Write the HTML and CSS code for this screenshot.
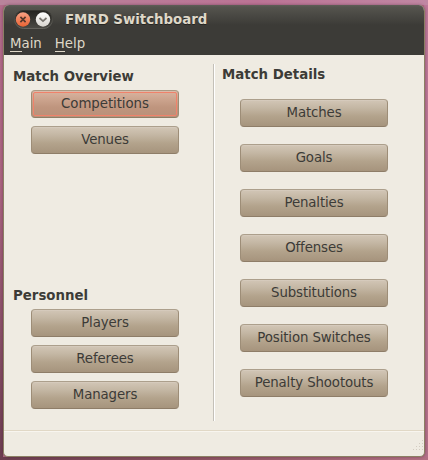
FILE: index.html
```html
<!DOCTYPE html>
<html lang="en">
<head>
<meta charset="utf-8">
<title>FMRD Switchboard</title>
<link rel="stylesheet" href="styles.css">
</head>
<body>
<div class="window">
  <header class="chrome">
    <div class="titlebar">
      <svg class="controls" width="39" height="19" viewBox="0 0 39 19" aria-hidden="true">
        <defs>
          <linearGradient id="pill" x1="0" y1="0" x2="0" y2="1"><stop offset="0" stop-color="#24231f"/><stop offset="1" stop-color="#4b4a45"/></linearGradient>
          <linearGradient id="rim" x1="0" y1="0" x2="0" y2="1"><stop offset="0" stop-color="#363530"/><stop offset="1" stop-color="#65645e"/></linearGradient>
          <linearGradient id="close" x1="0" y1="0" x2="0" y2="1"><stop offset="0" stop-color="#f9a184"/><stop offset="1" stop-color="#ea6434"/></linearGradient>
          <linearGradient id="shade" x1="0" y1="0" x2="0" y2="1"><stop offset="0" stop-color="#ffffff"/><stop offset="1" stop-color="#d8d5cf"/></linearGradient>
        </defs>
        <rect x=".5" y=".5" width="38" height="18" rx="9" fill="url(#pill)" stroke="url(#rim)"/>
        <circle cx="9" cy="9.5" r="7.2" fill="url(#close)"/>
        <path d="M6.4 6.9l5.2 5.2M11.6 6.9l-5.2 5.2" stroke="#57382b" stroke-width="1.7"/>
        <circle cx="29" cy="9.5" r="7.2" fill="url(#shade)"/>
        <path d="M25.5 8l3.5 3.2L32.5 8" fill="none" stroke="#77746e" stroke-width="1.7"/>
      </svg>
      <h1 class="title">FMRD Switchboard</h1>
    </div>
    <nav class="menubar"><span><span class="key">M</span>ain</span><span><span class="key">H</span>elp</span></nav>
  </header>
  <main class="content">
    <div class="left">
      <section class="group">
        <h2>Match Overview</h2>
        <button class="focused">Competitions</button>
        <button>Venues</button>
      </section>
      <section class="group">
        <h2>Personnel</h2>
        <button>Players</button>
        <button>Referees</button>
        <button>Managers</button>
      </section>
    </div>
    <section class="details">
      <h2>Match Details</h2>
      <button>Matches</button>
      <button>Goals</button>
      <button>Penalties</button>
      <button>Offenses</button>
      <button>Substitutions</button>
      <button>Position Switches</button>
      <button>Penalty Shootouts</button>
    </section>
  </main>
  <footer class="statusbar">
    <svg width="12" height="12" viewBox="0 0 12 12" aria-hidden="true">
      <path d="M10 1h1v1h-1zM7 4h1v1h-1zM10 4h1v1h-1zM4 7h1v1h-1zM7 7h1v1h-1zM10 7h1v1h-1zM1 10h1v1h-1zM4 10h1v1h-1zM7 10h1v1h-1zM10 10h1v1h-1z" fill="#d3ccc1"/>
    </svg>
  </footer>
</div>
</body>
</html>
```
FILE: styles.css
```css
* { box-sizing: border-box; }

body {
  margin: 0;
  width: 428px;
  height: 460px;
  padding: 5px 3px 3px 3px;
  overflow: hidden;
  font: 13.33px/16px "DejaVu Sans", sans-serif;
  color: #3c3b37;
  background:
    linear-gradient(90deg, #b9849b, #bb7395 60%, #c087a3) top / 100% 5px no-repeat,
    linear-gradient(90deg, #6c3e50, #8b5260 45%, #b27083) bottom / 100% 3px no-repeat,
    linear-gradient(#b36c8b, #ac6582 40%, #6c3d51) left / 3px 100% no-repeat,
    linear-gradient(#bd7899, #b27088) right / 4px 100% no-repeat,
    #b06e86;
}

.window {
  display: flex;
  flex-direction: column;
  height: 452px;
  border: 1px solid #8b8063;
  border-top: 0;
  border-radius: 6px 6px 5px 5px;
  background: #efebe2;
  overflow: hidden;
  box-shadow: 0 0 3px rgba(60, 25, 40, .45);
}

.chrome {
  height: 50px;
  flex: none;
  background: linear-gradient(#5f5e57, #55544e 2px, #3c3b37 20px);
  color: #dfd8c8;
}

.titlebar {
  display: flex;
  align-items: center;
  gap: 12px;
  height: 28px;
  padding-left: 10px;
}

.title {
  margin: 1px 0 0;
  font-size: 13.33px;
  line-height: 16px;
  text-shadow: 0 1px #252420;
}

.menubar {
  display: flex;
  gap: 13px;
  padding: 3px 6px 0;
}

.key {
  border-bottom: 1px solid #dfd8c8;
}

.content {
  display: flex;
  height: 375px;
  padding: 9px 9px;
}

.left {
  display: flex;
  flex-direction: column;
  justify-content: space-between;
  width: 202px;
  height: 357px;
  padding: 5px 0 12px;
  border-right: 1px solid #fff;
  box-shadow: inset -1px 0 #c4c0b8;
}

.group {
  display: flex;
  flex-direction: column;
  gap: 8px;
}

h2 {
  margin: 0 0 -3px;
  font-size: 13.33px;
  line-height: 16px;
}

button {
  width: 148px;
  height: 28px;
  flex: none;
  padding: 0;
  margin-left: 18px;
  border: 1px solid;
  border-color: #ac9f8c #9d8d77 #8e7d68;
  border-radius: 4px;
  font: inherit;
  letter-spacing: -.12px;
  color: #3c3b37;
  background: linear-gradient(#d2c6b6, #c4b7a4 30%, #b3a38c 62%, #a6947d);
  box-shadow: inset 0 1px rgba(255, 255, 255, .1);
}

.focused {
  background: linear-gradient(#d9b4a1, #cda58f 30%, #bf957e 62%, #b9917a);
  border-color: #aa9a84 #9d8c74 #8e7e66;
  outline: 1px solid #f0826a;
  outline-offset: -3px;
  letter-spacing: -.06px;
}

.details {
  display: flex;
  flex-direction: column;
  gap: 17px;
  padding: 3px 0 0 7px;
}

.details h2 { margin-bottom: -1px; }

.statusbar {
  display: flex;
  align-items: flex-end;
  justify-content: flex-end;
  flex: 1;
  padding: 0 0 5px;
  border-top: 1px solid #e1d8c6;
  box-shadow: inset 0 1px #f8f5ef;
}
```
